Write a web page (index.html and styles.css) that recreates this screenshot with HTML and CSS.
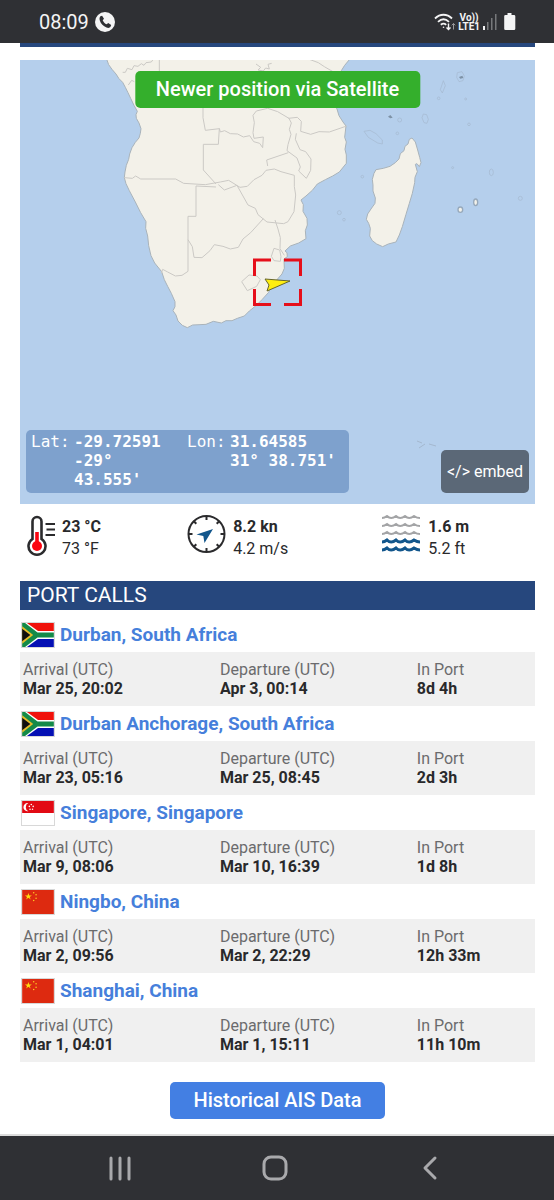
FILE: index.html
```html
<!DOCTYPE html>
<html lang="en">
<head>
    <meta charset="UTF-8">
    <meta name="viewport" content="width=device-width, initial-scale=1.0">
    <title>Vessel position and port calls</title>
    <link rel="stylesheet" href="styles.css">
</head>
<body>
    <header class="status-bar">
        <span class="clock">08:09</span>
        <svg class="call-icon" width="20" height="20" viewBox="0 0 20 20">
            <circle cx="10" cy="10" r="10" fill="#f4f4f5"/>
            <path d="M5.400 4.300l1.700-.6 1.900 3.100-1.300 1.400c.8 1.900 2.100 3.300 4 4.100l1.500-1.200 3 1.900-.7 1.800c-.8 1.300-2.500 1.300-4 .7-3.200-1.200-5.600-3.700-6.600-6.700-.5-1.600-.6-3.400.5-4.500z" fill="#2f3034"/>
        </svg>
        <div class="signals">
            <svg width="22" height="20" viewBox="0 0 22 20" fill="none" stroke="#f4f4f5" stroke-width="1.800">
                <path d="M1 6.500C6 1.500 13 1.500 18 6.500M4 9.800c3.500-3.300 7.500-3.300 11 0M6.800 12.800c1.800-1.500 3.700-1.500 5.400 0"/>
                <circle cx="9.500" cy="15.300" r=".8" fill="#f4f4f5" stroke="none"/>
                <path d="M14.500 11.500v6M12.500 15.500l2 2 2-2" stroke-width="1.400"/>
                <path d="M19.500 17.500v-6M17.800 13.300l1.700-1.800 1.700 1.800" stroke="#9a9a9d" stroke-width="1"/>
            </svg>
            <span class="network">Vo))<br>LTE1</span>
            <svg width="15" height="20" viewBox="0 0 15 20">
                <path d="M1 14h2v4H1z" fill="#f4f4f5"/>
                <path d="M5 10h1.500v8H5zM9 6h1.500v12H9zM13 2h1.500v16H13z" fill="#77787b"/>
            </svg>
            <svg class="battery" width="12" height="20" viewBox="0 0 12 20">
                <path d="M3.500 1h4v2H10a1.300 1.300 0 0 1 1.300 1.300v12.400A1.300 1.300 0 0 1 10 18H1.500A1.300 1.300 0 0 1 .2 16.700V4.300A1.300 1.300 0 0 1 1.500 3h2z" fill="#f4f4f5"/>
            </svg>
        </div>
    </header>

    <main class="content">
        <div class="section-edge"></div>

        <section class="map">
            <svg class="map-canvas" viewBox="0 0 515 444" role="img" aria-label="Map of southern Africa">
                <rect width="515" height="444" fill="#b5cfec"/>
                <!-- mainland -->
                <g transform="translate(90 -10) scale(.33333)">
                    <path fill="#f3f1e9" stroke="#a9b3ba" stroke-width="3" stroke-linejoin="round" d="M-12 22L-4 44 6 58 18 72 27 86 38 97 46 112 54 128 62 145 72 166 82 184 78 194 79 205 87 219 93 236 91 250 87 264 76 277 66 293 59 312 56 328 49 346 45 366 43 383 48 401 58 422 76 456 92 488 108 515 107 535 113 558 116 587 123 617 134 639 155 665 163 689 173 709 184 730 195 755 195 770 189 782 198 795 204 813 217 826 232 833 248 825 270 824 288 823 310 814 334 819 348 812 366 812 382 805 403 798 418 783 438 767 456 749 476 727 482 711 500 690 516 672 523 655 522 627 532 620 531 608 525 603 541 588 566 579 588 566 586 542 592 525 591 505 579 484 580 464 573 450 588 438 607 421 622 402 646 389 668 378 688 366 709 340 709 315 705 298 709 276 704 262 708 228 699 216 687 197 681 177 675 166 675 130 686 95 694 62 704 46 724 22z"/>
                    <g fill="none" stroke="#cbc9c5" stroke-width="3" stroke-linejoin="round">
                        <path d="M38 67h8l6-12 14 4 6-12 12 2 10-8 8 5 6-8 16-2 7-10M148 25v42M55 105l10-14 8 4"/>
                        <path d="M438 42l14 10-8 8 16 3 7-9 11 3-4-14 11-3M590 25l35 13 18 12 45 26"/>
                        <path d="M279 165v38l7 38 42-5-3 47h-45v77l38 42"/>
                        <path d="M328 235l3 11 13-4 17 9 22 1 17 9 19-4 12 18 18 5 9 13 2-32-28 4-3-17 4-30-4-22 10-13 34-8 30 10 34 20 7 14-6 19 5 15-9 31-3 18 30 22 10 27-5 12 23 22 13-24 1-34-16-22-17-6-14-31 3-18"/>
                        <path d="M535 205l27-3 12 12-2 30 30 9 25-8 31 1 52-18"/>
                        <path d="M535 308l-65 22 3 18"/>
                        <path d="M43 383l24 2 10-7 15 9h105l24 13 65 4 45-8 25-5 34 21 22-3 20-20 24-13 12-15 25-4 20 8 40 11v34l4 25-5 50-18 30-13 6-50-5-27-22-8-19-22-10-33-59-38 14-18-16"/>
                        <path d="M318 411l-60-3v91h-24v165l-18 12-20 2-23-12-15-8-4 12M234 569l13 21 5 32 24 1 24-21 13-18 26 5 22 8 24-5 14-25 23-19 38-42"/>
                        <path d="M495 510l9 27 7 26-1 33 13 20M509 600l-17-5-8 24 8 13 19 2 2-14zM395 695l22-20 24 3 10 11-11 20-28 13z"/>
                    </g>
                </g>
                <!-- Madagascar and the islands -->
                <g transform="translate(320 0) scale(.33333)">
                    <path fill="#f3f1e9" stroke="#a9b3ba" stroke-width="3" stroke-linejoin="round" d="M216 234L226 246 233 270 239 292 243 308 238 320 231 311 226 313 232 335 225 352 224 368 217 400 208 430 198 463 187 500 178 525 168 546 145 552 128 560 110 552 97 542 89 528 91 505 86 490 79 478 83 462 93 447 105 430 106 414 99 393 99 375 97 358 102 340 108 329 130 325 150 319 166 308 177 297 181 281 192 272 195 259 204 252 208 238z"/>
                    <g fill="none" stroke="#a4b8cf" stroke-width="2">
                        <path d="M72 214l18-3 18 10 19 19v12l-14-3-28-17zM250 162l10 2 5 14-4 12-9-2-6-15zM352 38l14-3 7 13-4 14-12 3-7-13zM310 62l6 15-9 22-6-10z"/>
                        <circle cx="296" cy="115" r="4"/>
                        <circle cx="377" cy="117" r="3"/>
                        <circle cx="387" cy="193" r="4"/>
                        <circle cx="179" cy="180" r="6"/>
                        <circle cx="172" cy="220" r="4"/>
                        <circle cx="67" cy="350" r="4"/>
                        <circle cx="338" cy="323" r="3"/>
                        <ellipse cx="454" cy="337" rx="6" ry="10"/>
                        <circle cx="541" cy="415" r="6"/>
                        <circle cx="-2" cy="458" r="6"/>
                        <circle cx="12" cy="479" r="4"/>
                    </g>
                    <path d="M144 170l7-5 7 8-7 2zM357 51l10-4 3 7-9 2z" fill="#7e92a6"/>
                    <g fill="#f3f1e9" stroke="#97a9bb" stroke-width="4">
                        <ellipse cx="361" cy="449" rx="7" ry="8"/>
                        <ellipse cx="407" cy="427" rx="6" ry="10"/>
                    </g>
                </g>
                <path d="M397 381l5 2M399 388l6-4M409 384l7 2" stroke="#a4b8cf" fill="none"/>
                <!-- ship marker -->
                <path d="M234.500 216v-16H251M264 200h16.500v16M280.500 229v15.500H264M251 244.500h-16.500V229" fill="none" stroke="#e60f1a" stroke-width="3"/>
                <path d="M245 219l25 2-23 10 2-6z" fill="#ffee10" stroke="#66652a" stroke-linejoin="round"/>
            </svg>

            <button class="btn satellite" type="button">Newer position via Satellite</button>

            <dl class="coordinates">
                <dt>Lat:</dt>
                <dd>-29.72591<br>-29° 43.555'</dd>
                <dt>Lon:</dt>
                <dd>31.64585<br>31° 38.751'</dd>
            </dl>

            <button class="embed" type="button">&lt;/&gt; embed</button>
        </section>

        <section class="weather">
            <div class="reading">
                <svg width="28" height="42" viewBox="0 0 28 42" fill="none">
                    <path d="M5.500 24V6.500a4.500 4.500 0 0 1 9 0V24a8.500 8.500 0 1 1-9 0z" stroke="#2b2b2d" stroke-width="2.600"/>
                    <path d="M10 17v14" stroke="#fb0510" stroke-width="3.600"/>
                    <circle cx="10" cy="31" r="5" fill="#fb0510"/>
                    <path d="M18.500 9H28M19.500 14.500H28M18.500 20H28" stroke="#2b2b2d" stroke-width="2"/>
                </svg>
                <p><strong>23 °C</strong><br>73 °F</p>
            </div>
            <div class="reading">
                <svg width="39" height="42" viewBox="0 0 39 42" fill="none">
                    <circle cx="19.500" cy="19" r="18" stroke="#2b2b2d" stroke-width="2"/>
                    <path d="M19.500 1v4M19.500 33v4M1.500 19h4M33.500 19h4M6.800 6.300l2.500 2.500M29.700 29.200l2.500 2.500M6.800 31.700l2.500-2.500M29.700 8.800l2.500-2.500" stroke="#2b2b2d" stroke-width="2"/>
                    <path d="M26 14L17.500 28l-1.200-7-6.800-1.500z" fill="#12568c"/>
                </svg>
                <p><strong>8.2 kn</strong><br>4.2 m/s</p>
            </div>
            <div class="reading">
                <svg width="39" height="42" viewBox="0 0 39 42" fill="none">
                    <g stroke="#a3a4a6" stroke-width="2">
                        <path id="wave" d="M0 3q2.500 0 5-2 4 4 9 0 4 4 9 0 4 4 9 0 3 2 6 2"/>
                        <use href="#wave" y="8"/>
                        <use href="#wave" y="16"/>
                    </g>
                    <g stroke="#12568c" stroke-width="3">
                        <path d="M0 27q2.500 0 5-2 4 4 9 0 4 4 9 0 4 4 9 0 3 2 6 2M0 35q2.500 0 5-2 4 4 9 0 4 4 9 0 4 4 9 0 3 2 6 2"/>
                    </g>
                </svg>
                <p><strong>1.6 m</strong><br>5.2 ft</p>
            </div>
        </section>

        <section class="port-calls">
            <h2>PORT CALLS</h2>

            <article>
                <h3>
                    <svg class="flag" viewBox="0 0 33 25">
                        <g id="flag-za">
                            <path d="M0 0h33v25H0z" fill="#fff"/>
                            <path d="M5 0h28v8.300H16.500z" fill="#f0120b"/>
                            <path d="M5 25h28v-8.300H16.500z" fill="#0510b4"/>
                            <path d="M0 0h3l13 10h17v5H16L3 25H0z" fill="#148a49"/>
                            <path d="M0 3.500l11.500 9L0 21.500z" fill="#e8bd29"/>
                            <path d="M0 6l8.500 6.500L0 19z" fill="#101010"/>
                        </g>
                    </svg>
                    <a href="#">Durban, South Africa</a>
                </h3>
                <dl class="times">
                    <div><dt>Arrival (UTC)</dt><dd>Mar 25, 20:02</dd></div>
                    <div><dt>Departure (UTC)</dt><dd>Apr 3, 00:14</dd></div>
                    <div><dt>In Port</dt><dd>8d 4h</dd></div>
                </dl>
            </article>

            <article>
                <h3>
                    <svg class="flag" viewBox="0 0 33 25"><use href="#flag-za"/></svg>
                    <a href="#">Durban Anchorage, South Africa</a>
                </h3>
                <dl class="times">
                    <div><dt>Arrival (UTC)</dt><dd>Mar 23, 05:16</dd></div>
                    <div><dt>Departure (UTC)</dt><dd>Mar 25, 08:45</dd></div>
                    <div><dt>In Port</dt><dd>2d 3h</dd></div>
                </dl>
            </article>

            <article>
                <h3>
                    <svg class="flag" viewBox="0 0 33 25">
                        <path d="M0 0h33v25H0z" fill="#fff"/>
                        <path d="M0 0h33v12.500H0z" fill="#e20a14"/>
                        <path d="M6.500 2.200a4.300 4.300 0 1 0 0 8.400 4.600 4.600 0 0 1 0-8.400z" fill="#fff"/>
                        <g fill="#fff">
                            <circle cx="9.500" cy="3.600" r=".8"/>
                            <circle cx="7.500" cy="5.600" r=".8"/>
                            <circle cx="11.500" cy="5.600" r=".8"/>
                            <circle cx="8.200" cy="8.600" r=".8"/>
                            <circle cx="10.800" cy="8.600" r=".8"/>
                        </g>
                    </svg>
                    <a href="#">Singapore, Singapore</a>
                </h3>
                <dl class="times">
                    <div><dt>Arrival (UTC)</dt><dd>Mar 9, 08:06</dd></div>
                    <div><dt>Departure (UTC)</dt><dd>Mar 10, 16:39</dd></div>
                    <div><dt>In Port</dt><dd>1d 8h</dd></div>
                </dl>
            </article>

            <article>
                <h3>
                    <svg class="flag" viewBox="0 0 33 25">
                        <g id="flag-cn">
                            <path d="M0 0h33v25H0z" fill="#dd2a10"/>
                            <path d="M6.500 3l.9 2.600h2.700L7.900 7.200l.9 2.700-2.300-1.700-2.300 1.700.9-2.700-2.200-1.600h2.700z" fill="#fd1"/>
                            <g fill="#fc2">
                                <circle cx="12" cy="2.800" r=".8"/>
                                <circle cx="14.500" cy="5" r=".8"/>
                                <circle cx="14.500" cy="8.500" r=".8"/>
                                <circle cx="12" cy="11" r=".8"/>
                            </g>
                        </g>
                    </svg>
                    <a href="#">Ningbo, China</a>
                </h3>
                <dl class="times">
                    <div><dt>Arrival (UTC)</dt><dd>Mar 2, 09:56</dd></div>
                    <div><dt>Departure (UTC)</dt><dd>Mar 2, 22:29</dd></div>
                    <div><dt>In Port</dt><dd>12h 33m</dd></div>
                </dl>
            </article>

            <article>
                <h3>
                    <svg class="flag" viewBox="0 0 33 25"><use href="#flag-cn"/></svg>
                    <a href="#">Shanghai, China</a>
                </h3>
                <dl class="times">
                    <div><dt>Arrival (UTC)</dt><dd>Mar 1, 04:01</dd></div>
                    <div><dt>Departure (UTC)</dt><dd>Mar 1, 15:11</dd></div>
                    <div><dt>In Port</dt><dd>11h 10m</dd></div>
                </dl>
            </article>
        </section>

        <button class="btn history" type="button">Historical AIS Data</button>
    </main>

    <nav class="nav-bar">
        <button type="button" aria-label="Recent apps">
            <svg width="26" height="26" viewBox="0 0 26 26"><path d="M4 3v21M13 3v21M22 3v21"/></svg>
        </button>
        <button type="button" aria-label="Home">
            <svg width="26" height="26" viewBox="0 0 26 26"><rect x="2" y="2" width="22" height="22" rx="7"/></svg>
        </button>
        <button type="button" aria-label="Back">
            <svg width="26" height="26" viewBox="0 0 26 26"><path d="M18 3L8 13l10 10"/></svg>
        </button>
    </nav>
</body>
</html>
```
FILE: styles.css
```css
* {
    box-sizing: border-box;
}

body {
    font-family: Roboto, "Liberation Sans", sans-serif;
    font-size: 16px;
    display: flex;
    flex-direction: column;
    min-height: 100vh;
    margin: 0;
    background-color: #fff;
    color: #29292b;
}

svg {
    display: block;
    flex: none;
}

h2, h3, p, dl, dd {
    margin: 0;
}

button {
    font-family: inherit;
    border: 0;
    cursor: pointer;
}

/* phone status bar */
.status-bar {
    display: flex;
    align-items: center;
    height: 43px;
    padding: 0 38px 0 39px;
    background-color: #2f3034;
    color: #f4f4f5;
}

.clock {
    font-size: 20px;
}

.call-icon {
    margin-left: 6px;
}

.signals {
    display: flex;
    align-items: center;
    gap: 2px;
    margin-left: auto;
}

.network {
    font-size: 10px;
    line-height: 9px;
    font-weight: 700;
    text-align: center;
}

.battery {
    margin-left: 5px;
}

.content {
    flex: 1;
    display: flex;
    flex-direction: column;
    padding: 0 19px 15px 20px;
    border-bottom: 2px solid #dcdcdc;
}

.section-edge {
    height: 4px;
    margin-bottom: 13px;
    background-color: #26477d;
}

.map {
    position: relative;
}

.map-canvas {
    width: 100%;
    height: auto;
}

.btn {
    height: 37px;
    padding: 0 21px 2px;
    border-radius: 5px;
    color: #fff;
    font-size: 20px;
    font-weight: 500;
}

.satellite {
    position: absolute;
    top: 11px;
    left: 50%;
    transform: translateX(-50%);
    background-color: #34af2c;
    white-space: nowrap;
}

.coordinates {
    position: absolute;
    left: 6px;
    bottom: 11px;
    display: grid;
    grid-template-columns: 43px 113px 43px 112px;
    padding: 2px 7px 4px 5px;
    border-radius: 5px;
    background-color: #7ea1cd;
    color: #fff;
    font-family: "DejaVu Sans Mono", monospace;
    line-height: 19px;
}

.coordinates dd {
    padding-right: 4px;
    font-weight: 700;
}

.embed {
    position: absolute;
    right: 6px;
    bottom: 11px;
    height: 43px;
    padding: 0 6px;
    border-radius: 5px;
    background-color: #5b6877;
    color: #fff;
    font-size: 16px;
}

.weather {
    display: grid;
    grid-template-columns: 64fr 78fr 61fr;
    padding: 11px 0 21px 7px;
}

.reading {
    display: flex;
    align-items: flex-start;
    gap: 7px;
    line-height: 22px;
}

.reading p {
    padding-top: 1px;
}

.port-calls h2 {
    padding: 0 7px;
    margin-bottom: 7px;
    background-color: #26477d;
    color: #fff;
    font-size: 21px;
    font-weight: 400;
    line-height: 29px;
}

.port-calls h3 {
    display: flex;
    align-items: center;
    gap: 5px;
    height: 35px;
    padding-left: 1px;
    font-size: 19px;
    font-weight: 700;
}

.port-calls a {
    color: #467fdb;
    text-decoration: none;
}

.flag {
    width: 34px;
    height: 26px;
    border: 1px solid #d8d8d8;
}

.times {
    display: grid;
    grid-template-columns: 5fr 5fr 3fr;
    padding: 8px 0 8px 3px;
    background-color: #f0f0f0;
    line-height: 19px;
}

.times dt {
    color: #6b6b6d;
}

.times dd {
    font-weight: 700;
}

.history {
    align-self: center;
    margin-top: 20px;
    padding: 0 23px 2px;
    background-color: #437fe3;
}

/* phone navigation bar */
.nav-bar {
    display: flex;
    justify-content: space-around;
    align-items: center;
    height: 64px;
    padding: 0 47px 0 43px;
    background-color: #2f3034;
}

.nav-bar button {
    padding: 8px;
    background: none;
}

.nav-bar svg {
    fill: none;
    stroke: #a9a9ac;
    stroke-width: 3;
    stroke-linecap: round;
    stroke-linejoin: round;
}
```
